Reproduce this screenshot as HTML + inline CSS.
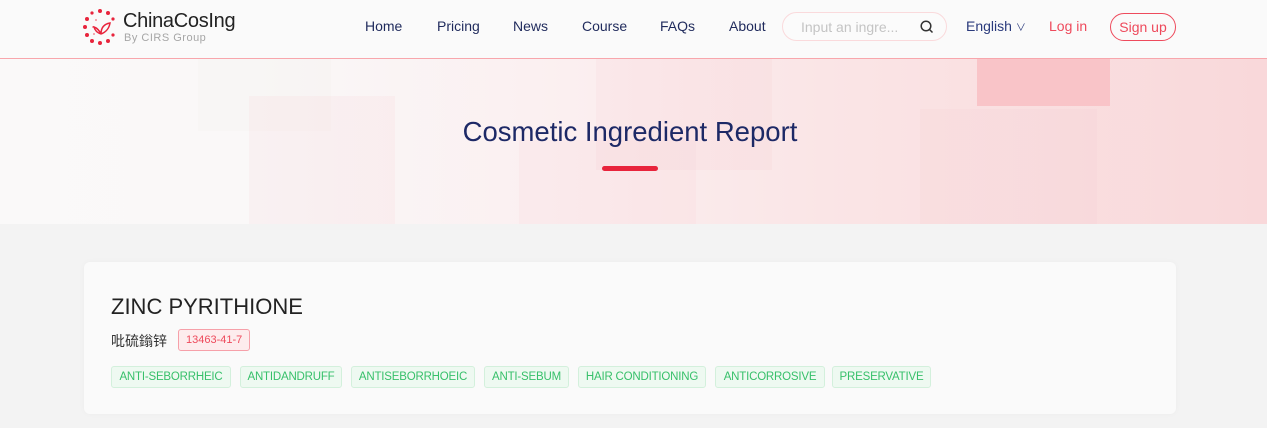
<!DOCTYPE html>
<html><head><meta charset="utf-8"><style>
*{margin:0;padding:0;box-sizing:border-box}
body{width:1267px;height:428px;overflow:hidden;background:#f3f3f3;font-family:"Liberation Sans","Noto Sans CJK SC",sans-serif;position:relative}
.hdr{position:absolute;left:0;top:0;width:1267px;height:59px;background:#fafafa;border-bottom:1px solid #f8a6ac}
.nav{position:absolute;top:18px;font-size:14px;color:#1f2a5c}
.search{position:absolute;left:782px;top:12px;width:165px;height:29px;border:1px solid #fadadc;border-radius:15px;background:#fbfbfb}
.search span{position:absolute;left:18px;top:6px;font-size:14px;color:#c4c4c4}
.banner{position:absolute;left:0;top:59px;width:1267px;height:165px;background:linear-gradient(90deg,#faf9f9 0%,#faf8f8 20%,#fbeff0 45%,#fae5e6 65%,#f9d8da 100%);overflow:hidden}
.r{position:absolute}
.title{position:absolute;left:0;width:1260px;top:116px;text-align:center;font-size:27.5px;color:#1d2966}
.bar{position:absolute;left:602px;top:166px;width:56px;height:5px;border-radius:3px;background:#e8243c}
.card{position:absolute;left:84px;top:262px;width:1092px;height:152px;background:#fafafa;border-radius:6px;box-shadow:0 0 6px rgba(0,0,0,.03)}
.tag{position:absolute;top:104px;height:22px;line-height:20px;border:1px solid #d3f0dc;background:#eef9f1;color:#37c06a;font-size:11.5px;border-radius:3px;text-align:center;white-space:nowrap;letter-spacing:-.2px}
</style></head><body>
<div class="hdr">
<svg style="position:absolute;left:82px;top:8px" width="36" height="38" viewBox="0 0 36 38">
<g fill="#e8243c">
<circle cx="18" cy="3" r="2"/><circle cx="26" cy="5" r="2"/><circle cx="31" cy="11" r="1.6"/>
<circle cx="10" cy="5" r="1.6"/><circle cx="5" cy="11" r="2"/><circle cx="3" cy="19" r="2"/>
<circle cx="5" cy="27" r="2"/><circle cx="10" cy="33" r="2"/><circle cx="18" cy="35" r="2"/>
<circle cx="26" cy="33" r="2"/><circle cx="31" cy="27" r="1.6"/>
<circle cx="11" cy="19" r="1" opacity=".5"/><circle cx="14" cy="12" r="1" opacity=".5"/><circle cx="12" cy="26" r="1" opacity=".5"/>
</g>
<path d="M19 26 C19 20 22 16 28 15 C27 21 24 24 19 26 M19 26 C17 22 15 20 12 19 C13 23 16 25 19 26" fill="none" stroke="#e8243c" stroke-width="1.5"/>
</svg>
<div style="position:absolute;left:123px;top:10px;font-size:20px;color:#222;letter-spacing:-.3px">ChinaCosIng</div>
<div style="position:absolute;left:124px;top:32px;font-size:11px;color:#a6a6a6;letter-spacing:.5px">By CIRS Group</div>
<div class="nav" style="left:365px">Home</div>
<div class="nav" style="left:437px">Pricing</div>
<div class="nav" style="left:513px">News</div>
<div class="nav" style="left:582px">Course</div>
<div class="nav" style="left:660px">FAQs</div>
<div class="nav" style="left:729px">About</div>
<div class="search"><span>Input an ingre...</span>
<svg style="position:absolute;left:137px;top:7px" width="14" height="14" viewBox="0 0 14 14"><circle cx="6" cy="6" r="4.8" fill="none" stroke="#333" stroke-width="1.5"/><path d="M9.5 9.5 L12.5 12.5" stroke="#333" stroke-width="1.5"/></svg></div>
<div class="nav" style="left:966px;color:#2a3a7c">English <span style="font-size:10px">&#x2228;</span></div>
<div class="nav" style="left:1049px;color:#ee4a5c">Log in</div>
<div style="position:absolute;left:1110px;top:13px;width:66px;height:28px;border:1px solid #ee4a5c;border-radius:14px;color:#ee4a5c;font-size:14px;text-align:center;line-height:26px">Sign up</div>
</div>
<div class="banner">
<div class="r" style="left:198px;top:0;width:133px;height:72px;background:rgba(240,235,225,.15)"></div>
<div class="r" style="left:249px;top:37px;width:146px;height:128px;background:rgba(245,200,205,.15)"></div>
<div class="r" style="left:519px;top:81px;width:177px;height:84px;background:rgba(245,200,205,.15)"></div>
<div class="r" style="left:596px;top:0;width:176px;height:111px;background:rgba(245,190,195,.12)"></div>
<div class="r" style="left:920px;top:50px;width:177px;height:115px;background:rgba(245,190,195,.1)"></div>
<div class="r" style="left:977px;top:0;width:133px;height:47px;background:#f9c4c8"></div>
</div>
<div class="title">Cosmetic Ingredient Report</div>
<div class="bar"></div>
<div class="card">
<div style="position:absolute;left:27px;top:32px;font-size:22px;color:#222">ZINC PYRITHIONE</div>
<div style="position:absolute;left:27px;top:69px;font-size:14px;color:#333">吡硫鎓锌</div>
<div style="position:absolute;left:94px;top:67px;height:22px;line-height:20px;padding:0 7px;border:1px solid #f6a0a9;background:#fdeced;color:#ee4a5c;font-size:11px;border-radius:3px">13463-41-7</div>
<div class="tag" style="left:27px;width:120px">ANTI-SEBORRHEIC</div>
<div class="tag" style="left:156px;width:102px">ANTIDANDRUFF</div>
<div class="tag" style="left:267px;width:124px">ANTISEBORRHOEIC</div>
<div class="tag" style="left:400px;width:85px">ANTI-SEBUM</div>
<div class="tag" style="left:494px;width:128px">HAIR CONDITIONING</div>
<div class="tag" style="left:631px;width:110px">ANTICORROSIVE</div>
<div class="tag" style="left:748px;width:99px">PRESERVATIVE</div>
</div>
</body></html>
